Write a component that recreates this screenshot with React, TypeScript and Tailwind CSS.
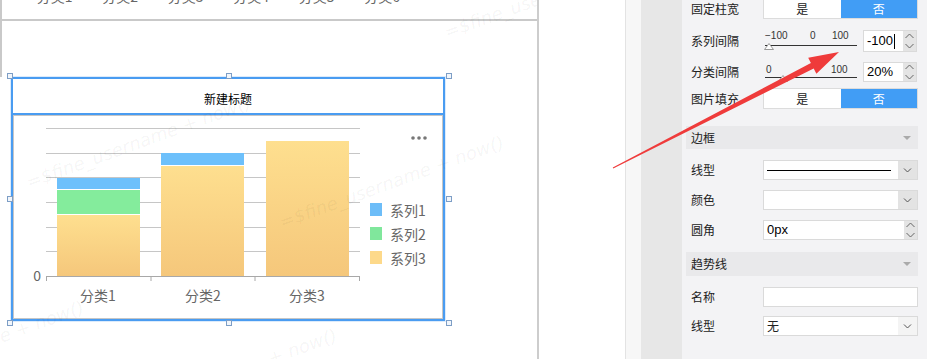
const cjk = "font-['Noto_Sans_CJK_SC','Noto_Sans',sans-serif]";
const num = "font-['Liberation_Sans','Noto_Sans_CJK_SC',sans-serif]";

function SpinBtn() {
  return (
    <div className="flex w-[13px] shrink-0 items-center justify-center self-stretch bg-[#e4e4e4]">
      <svg width="13" height="20" viewBox="0 0 13 20" fill="none" stroke="#666" strokeWidth="1">
        <polyline points="2.5,7 6.5,3 10.5,7" />
        <polyline points="2.5,13 6.5,17 10.5,13" />
      </svg>
    </div>
  );
}

function DropBtn({ light }: { light?: boolean }) {
  return (
    <div
      className={
        light
          ? "flex w-[19px] shrink-0 items-center justify-center self-stretch bg-[#f4f4f4]"
          : "flex w-[19px] shrink-0 items-center justify-center self-stretch bg-[#e3e3e3]"
      }
    >
      <svg width="9" height="5" viewBox="0 0 9 5" fill="none" stroke="#555" strokeWidth="1">
        <polyline points="1,0.5 4.5,4 8,0.5" />
      </svg>
    </div>
  );
}

function Toggle() {
  return (
    <div className="flex h-full w-full border border-[#dcdcdc] text-[12px]">
      <div className="flex flex-1 items-center justify-center bg-white text-[#222]">是</div>
      <div className="flex flex-1 items-center justify-center bg-[#419df5] text-white">否</div>
    </div>
  );
}

function Row({ label, cls, children }: { label: string; cls: string; children?: React.ReactNode }) {
  return (
    <div className={cls}>
      <div className="w-[72px] shrink-0">{label}</div>
      <div className="flex h-full w-[155px]">{children}</div>
    </div>
  );
}

function Header({ title, cls }: { title: string; cls: string }) {
  return (
    <div className={cls}>
      <span>{title}</span>
      <span className="h-0 w-0 border-x-4 border-t-4 border-x-transparent border-t-[#aaaaaa]" />
    </div>
  );
}

function NumBox({ value, caret }: { value: string; caret?: boolean }) {
  return (
    <div className="flex h-full w-[54px] border border-[#dadada] bg-white">
      <div className={`flex flex-1 items-center pl-[3px] text-[13px] text-black ${num}`}>
        {value}
        {caret && <span className="ml-px h-[15px] w-px bg-black" />}
      </div>
      <SpinBtn />
    </div>
  );
}

function Chart() {
  const grid = [12, 37, 61, 86, 111, 135];
  const ticks = [32.5, 137, 241, 345.5];
  return (
    <svg width="428" height="202" className={`block ${cjk}`}>
      <defs>
        <linearGradient id="yel" x1="0" y1="0" x2="0" y2="1">
          <stop offset="0" stopColor="#fedf8f" />
          <stop offset="1" stopColor="#f5c77b" />
        </linearGradient>
      </defs>
      {grid.map((y) => (
        <line key={y} x1={32} x2={346} y1={y + 0.5} y2={y + 0.5} stroke="#c6c6c6" />
      ))}
      <rect x={43} y={62} width={83} height={11} fill="#6dc0fb" />
      <rect x={43} y={74} width={83} height={24} fill="#84ec9c" />
      <rect x={43} y={99} width={83} height={61} fill="url(#yel)" />
      <rect x={147} y={37} width={83} height={12} fill="#6dc0fb" />
      <rect x={147} y={50} width={83} height={110} fill="url(#yel)" />
      <rect x={252} y={25} width={83} height={135} fill="url(#yel)" />
      <line x1={32} x2={346} y1={160.5} y2={160.5} stroke="#a8a8a8" />
      {ticks.map((x) => (
        <line key={x} x1={x} x2={x} y1={160} y2={165} stroke="#a8a8a8" />
      ))}
      <text x={27} y={159} textAnchor="end" dominantBaseline="central" fontSize="14" fill="#666">
        0
      </text>
      {[
        [84, "分类1"],
        [189, "分类2"],
        [293, "分类3"],
      ].map(([x, t]) => (
        <text key={t} x={x} y={179} textAnchor="middle" dominantBaseline="central" fontSize="14" fill="#666">
          {t}
        </text>
      ))}
      {[
        [87, "#6dbdf8", "系列1"],
        [111, "#80e79c", "系列2"],
        [135, "#fdd98a", "系列3"],
      ].map(([y, c, t]) => (
        <g key={t as string}>
          <rect x={356} y={y as number} width={12} height={13} fill={c as string} />
          <text x={376} y={(y as number) + 6.5} dominantBaseline="central" fontSize="14" fill="#666">
            {t}
          </text>
        </g>
      ))}
      {[399, 405, 411].map((x) => (
        <circle key={x} cx={x} cy={22} r={1.8} fill="#777" />
      ))}
    </svg>
  );
}

const handle = "absolute h-[6px] w-[6px] border border-[#7d9ec6] bg-[#f2f6fb]";

export default function App() {
  return (
    <div className={`relative flex h-[359px] w-[927px] overflow-hidden bg-white ${cjk}`}>
      {/* canvas */}
      <div className="relative w-[539px] shrink-0 border-r-2 border-[#cdcdcd]">
        <div className="flex h-[21px] overflow-hidden border-b-2 border-l-2 border-[#c9c9c9] pl-[20px]">
          {["分类1", "分类2", "分类3", "分类4", "分类5", "分类6"].map((t) => (
            <div key={t} className="-mt-[11px] w-[65.5px] text-center text-[14px] leading-[14px] text-[#666]">
              {t}
            </div>
          ))}
        </div>
        <div className="h-[56px] w-0 border-l-2 border-[#c9c9c9]" />
        <div className="relative ml-[11px] h-[244px] w-[434px] border-2 border-[#4a9cf1] shadow-[0_0_0_1px_#dcebfb]">
          <div className="flex h-[34px] items-center justify-center pt-[6px] text-[12px] text-black">新建标题</div>
          <div className="h-[2px] bg-[#4a9cf1]" />
          <div className="h-[204px] border border-[#c6c6c6] bg-white">
            <Chart />
          </div>
          <div className={`${handle} -left-[6px] -top-[6px]`} />
          <div className={`${handle} left-[213px] -top-[6px]`} />
          <div className={`${handle} left-[433px] -top-[6px]`} />
          <div className={`${handle} -left-[6px] top-[117px]`} />
          <div className={`${handle} left-[433px] top-[117px]`} />
          <div className={`${handle} -left-[6px] top-[241px]`} />
          <div className={`${handle} left-[213px] top-[241px]`} />
          <div className={`${handle} left-[433px] top-[241px]`} />
        </div>
        {/* watermark */}
        <div className="pointer-events-none absolute inset-0 z-10 overflow-hidden font-['DejaVu_Sans',sans-serif] text-[18px] italic leading-[22px] whitespace-nowrap text-[rgba(0,0,0,0.05)]">
          <span className="absolute left-[27px] top-[172px] origin-left -rotate-[20deg]">=$fine_username + now()</span>
          <span className="absolute left-[445px] top-[22px] origin-left -rotate-[20deg]">=$fine_username + now()</span>
          <span className="absolute left-[280px] top-[212px] origin-left -rotate-[20deg]">=$fine_username + now()</span>
          <span className="absolute -left-[140px] top-[377px] origin-left -rotate-[20deg]">=$fine_username + now()</span>
          <span className="absolute left-[113px] top-[405px] origin-left -rotate-[20deg]">=$fine_username + now()</span>
        </div>
      </div>

      <div className="w-[86px] shrink-0 bg-white" />
      <div className="w-px shrink-0 bg-[#e3e3e3]" />
      <div className="w-[15px] shrink-0 bg-[#f7f7f7]" />
      <div className="w-[41px] shrink-0 bg-[#e7e7e7]" />

      {/* property panel */}
      <div className="flex w-[245px] shrink-0 flex-col bg-[#f3f3f5] pl-[9px] text-[12px] text-[#222]">
        <Row label="固定柱宽" cls="-mt-[2px] flex h-[21px] items-center">
          <Toggle />
        </Row>
        <Row label="系列间隔" cls="mt-[11px] flex h-[22px] items-center">
          <div className="relative ml-[2px] mr-[6px] h-full w-[92px]">
            <div className={`flex pt-[1px] text-[10px] leading-[10px] text-[#333] ${num}`}>
              <span className="w-[45px]">−100</span>
              <span className="w-[22px]">0</span>
              <span>100</span>
            </div>
            <div className="absolute left-0 right-0 top-[15px] h-px bg-[#333]" />
            <svg className="absolute -left-[1px] top-[13px]" width="10" height="7" viewBox="0 0 10 7">
              <polygon points="5,0.5 9.5,6.5 0.5,6.5" fill="white" stroke="#999" />
            </svg>
          </div>
          <NumBox value="-100" caret />
        </Row>
        <Row label="分类间隔" cls="mt-[10px] flex h-[20px] items-center">
          <div className="relative ml-[2px] mr-[6px] h-full w-[92px]">
            <div className={`flex pt-[3px] text-[10px] leading-[10px] text-[#333] ${num}`}>
              <span className="w-[66px] pl-[1px]">0</span>
              <span>100</span>
            </div>
            <div className="absolute left-0 right-0 top-[15px] h-px bg-[#333]" />
            <svg className="absolute left-[13px] top-[13px]" width="10" height="7" viewBox="0 0 10 7">
              <polygon points="5,0.5 9.5,6.5 0.5,6.5" fill="white" stroke="#999" />
            </svg>
          </div>
          <NumBox value="20%" />
        </Row>
        <Row label="图片填充" cls="mt-[6px] flex h-[21px] items-center">
          <Toggle />
        </Row>

        <Header
          title="边框"
          cls="-ml-[5px] mt-[17px] flex h-[23px] w-[232px] items-center justify-between bg-[#e9e9eb] pl-[5px] pr-[7px]"
        />
        <Row label="线型" cls="mt-[11px] flex h-[20px] items-center">
          <div className="flex h-full w-full border border-[#dadada] bg-white">
            <div className="flex flex-1 items-center pl-[3px] pr-[7px]">
              <div className="h-px w-full bg-black" />
            </div>
            <DropBtn />
          </div>
        </Row>
        <Row label="颜色" cls="mt-[10px] flex h-[20px] items-center">
          <div className="flex h-full w-full border border-[#dadada] bg-white">
            <div className="flex-1" />
            <DropBtn />
          </div>
        </Row>
        <Row label="圆角" cls="mt-[10px] flex h-[20px] items-center">
          <div className="flex h-full w-full border border-[#dadada] bg-white">
            <div className={`flex flex-1 items-center pl-[3px] text-[13px] text-black ${num}`}>0px</div>
            <SpinBtn />
          </div>
        </Row>

        <Header
          title="趋势线"
          cls="-ml-[5px] mt-[12px] flex h-[24px] w-[232px] items-center justify-between bg-[#e9e9eb] pl-[5px] pr-[7px]"
        />
        <Row label="名称" cls="mt-[11px] flex h-[20px] items-center">
          <div className="h-full w-full border border-[#dadada] bg-white" />
        </Row>
        <Row label="线型" cls="mt-[9px] flex h-[20px] items-center">
          <div className="flex h-full w-full border border-[#dadada] bg-white">
            <div className="flex flex-1 items-center pl-[3px]">无</div>
            <DropBtn light />
          </div>
        </Row>
      </div>

      {/* red annotation arrow */}
      <svg className="pointer-events-none absolute left-0 top-0 z-20" width="927" height="359">
        <polygon
          points="612.8,167.6 810.9,62.9 808.2,57.7 839,52 816.4,73.7 813.7,68.4 613.2,168.4"
          fill="#ef3b3b"
        />
      </svg>
    </div>
  );
}
